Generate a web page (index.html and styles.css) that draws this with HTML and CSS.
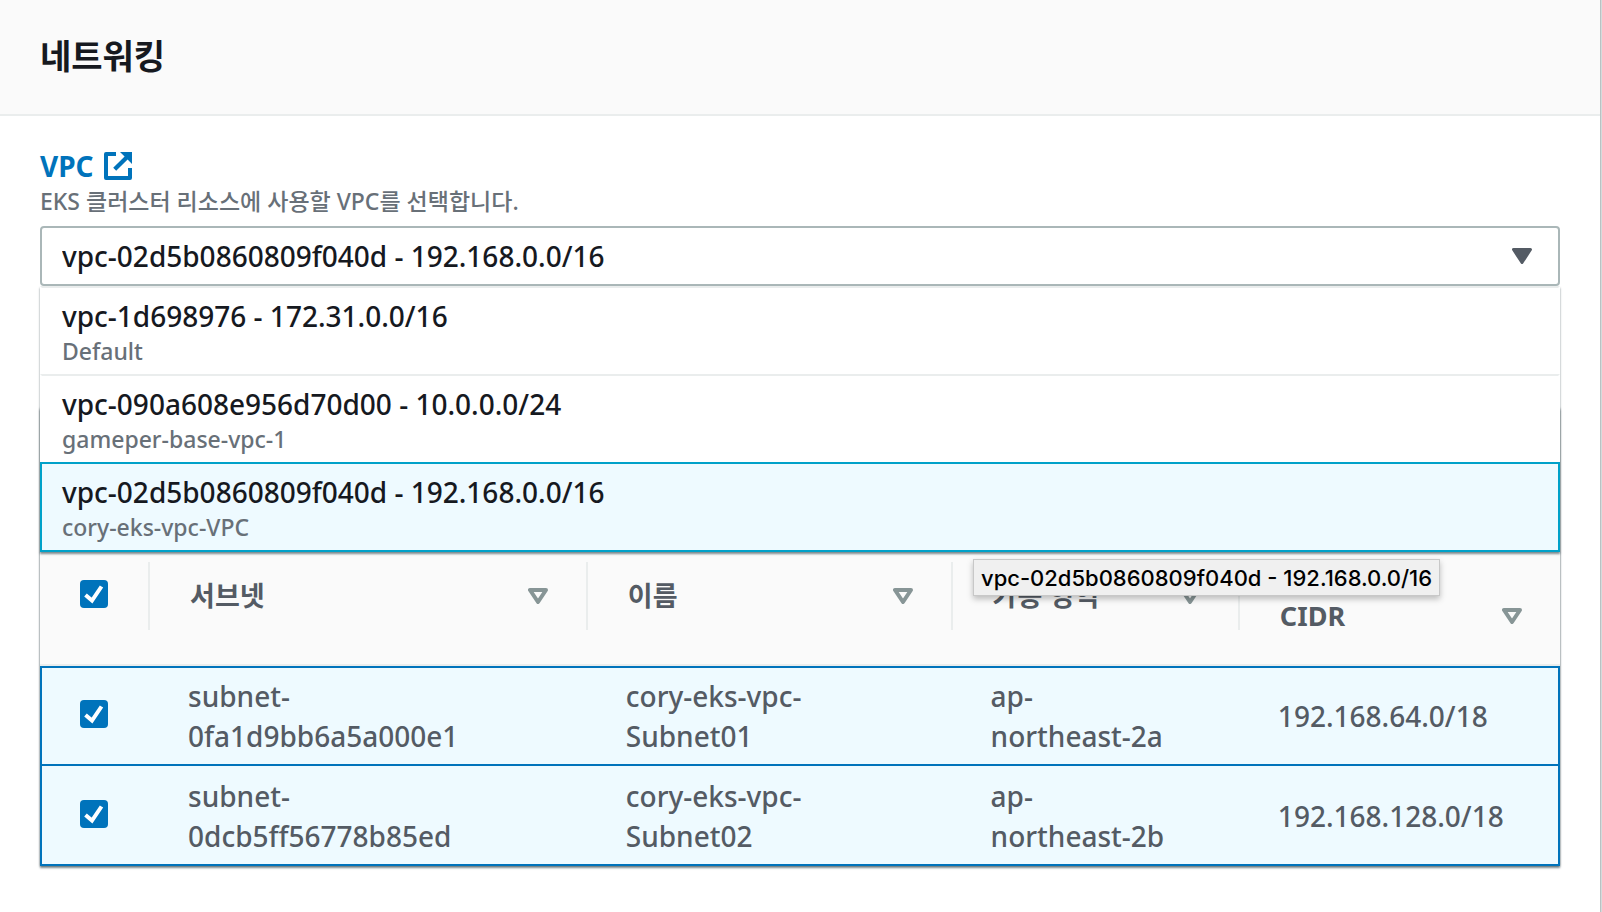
FILE: index.html
```html
<!DOCTYPE html>
<html lang="ko">
<head>
<meta charset="utf-8">
<title>네트워킹</title>
<link rel="stylesheet" href="styles.css">
</head>
<body>
<section class="panel">
  <header class="panel-header"><h2 class="panel-title">네트워킹</h2></header>
  <div class="panel-body">
    <div class="field">
      <label class="field-label" for="vpc"><a class="link" href="#vpc">VPC
        <svg class="external" viewBox="0 0 28 28" aria-hidden="true"><path d="M12 2H2V26H26V16" fill="none" stroke="currentColor" stroke-width="4" stroke-linejoin="round"/><path d="M16 0H28V12L23.600 7.400L12.200 18.800L9.200 15.800L20.600 4.400Z" fill="currentColor"/></svg></a></label>
      <p class="hint">EKS 클러스터 리소스에 사용할 VPC를 선택합니다.</p>
      <div class="dropdown">
        <select class="select" id="vpc"><option>vpc-02d5b0860809f040d - 192.168.0.0/16</option></select>
        <svg class="caret" viewBox="0 0 20 16" aria-hidden="true"><path d="M1.500 1.500H18.500L10 14.500Z" fill="currentColor" stroke="currentColor" stroke-width="3" stroke-linejoin="round"/></svg>
        <ul class="menu" role="listbox">
          <li class="option" role="option"><span class="option-name">vpc-1d698976 - 172.31.0.0/16</span><span class="option-tag">Default</span></li>
          <li class="option" role="option"><span class="option-name">vpc-090a608e956d70d00 - 10.0.0.0/24</span><span class="option-tag">gameper-base-vpc-1</span></li>
          <li class="option selected" role="option" aria-selected="true"><span class="option-name">vpc-02d5b0860809f040d - 192.168.0.0/16</span><span class="option-tag">cory-eks-vpc-VPC</span></li>
        </ul>
        <div class="tooltip" role="tooltip">vpc-02d5b0860809f040d - 192.168.0.0/16</div>
      </div>
    </div>
    <div class="subnets">
      <table class="table">
        <colgroup><col class="col-check"><col class="col-subnet"><col class="col-name"><col class="col-zone"><col class="col-cidr"></colgroup>
        <thead>
          <tr>
            <th><div class="head"><input class="checkbox" type="checkbox" checked aria-label="모두 선택"></div></th>
            <th><div class="head"><span>서브넷</span><svg class="sort" viewBox="0 0 20 16"><path d="M2 2H18L10 14Z"/></svg></div></th>
            <th><div class="head"><span>이름</span><svg class="sort" viewBox="0 0 20 16"><path d="M2 2H18L10 14Z"/></svg></div></th>
            <th><div class="head"><span>가용 영역</span><svg class="sort" viewBox="0 0 20 16"><path d="M2 2H18L10 14Z"/></svg></div></th>
            <th><div class="head low"><span>CIDR</span><svg class="sort" viewBox="0 0 20 16"><path d="M2 2H18L10 14Z"/></svg></div></th>
          </tr>
        </thead>
        <tbody>
          <tr>
            <td><input class="checkbox" type="checkbox" checked aria-label="subnet-0fa1d9bb6a5a000e1"></td>
            <td>subnet-<br>0fa1d9bb6a5a000e1</td><td>cory-eks-vpc-<br>Subnet01</td><td>ap-<br>northeast-2a</td><td>192.168.64.0/18</td>
          </tr>
          <tr>
            <td><input class="checkbox" type="checkbox" checked aria-label="subnet-0dcb5ff56778b85ed"></td>
            <td>subnet-<br>0dcb5ff56778b85ed</td><td>cory-eks-vpc-<br>Subnet02</td><td>ap-<br>northeast-2b</td><td>192.168.128.0/18</td>
          </tr>
        </tbody>
      </table>
    </div>
  </div>
</section>
</body>
</html>
```
FILE: styles.css
```css
* { box-sizing: border-box; }
body {
  margin: 0;
  background: #d5dadb;
  color: #16191f;
  font-family: "Noto Sans", "Noto Sans CJK KR", sans-serif;
  font-size: 28px;
  font-weight: 500;
}
.panel {
  min-height: 100vh;
  margin-right: 1px;
  background: #fff;
  border-right: 1px solid #b9c2c3;
}
.panel-header {
  padding: 30px 40px 34px;
  background: #fafafa;
  border-bottom: 2px solid #eaeded;
}
.panel-title {
  margin: 0;
  font-size: 34px;
  line-height: 50px;
  font-family: "Noto Sans CJK KR", sans-serif;
}
.panel-body { padding: 32px 40px 46px; }
.field-label { display: block; height: 36px; line-height: 36px; font-weight: 700; }
.link {
  display: inline-flex;
  align-items: center;
  gap: 10px;
  color: #0073bb;
  text-decoration: none;
}
.external { width: 28px; height: 28px; }
.hint {
  margin: 0 0 8px;
  color: #687078;
  font-size: 23px;
  line-height: 34px;
}
.dropdown { position: relative; }
.select {
  display: block;
  width: 100%;
  height: 60px;
  padding: 0 60px 0 20px;
  border: 2px solid #aab7b8;
  border-radius: 4px;
  background: #fff;
  color: inherit;
  font: inherit;
  appearance: none;
}
.caret {
  position: absolute;
  top: 22px;
  right: 28px;
  width: 20px;
  height: 16px;
  color: #545b64;
  pointer-events: none;
}
.menu {
  position: absolute;
  z-index: 1;
  top: 100%;
  left: 0;
  right: 0;
  margin: 0;
  padding: 0;
  list-style: none;
  background: #fff;
  box-shadow: 0 2px 2px rgba(0, 28, 36, 0.5);
}
.option {
  display: grid;
  padding: 8px 20px;
  border: 2px solid transparent;
  border-top-color: #eaeded;
  border-bottom: 0;
}
.option.selected { border: 2px solid #00a1c9; background: #eefaff; }
.option-name { line-height: 40px; }
.option-tag { color: #687078; font-size: 23px; line-height: 30px; }
.tooltip {
  position: absolute;
  z-index: 2;
  top: 333px;
  left: 933px;
  padding: 1px 7px 0;
  border: 1px solid #c8c8c8;
  background: #f0f0f0;
  box-shadow: 0 3px 6px rgba(0, 0, 0, 0.25);
  color: #000;
  font-family: Inter, sans-serif;
  font-size: 22px;
  line-height: 34px;
  white-space: nowrap;
}
.subnets {
  margin-top: 122px;
  padding-top: 120px;
  background: #fafafa;
  box-shadow: 0 2px 2px rgba(0, 28, 36, 0.5), 0 0 2px rgba(0, 28, 36, 0.4);
}
.table {
  width: 100%;
  border-collapse: separate;
  border-spacing: 0;
  table-layout: fixed;
  color: #545b64;
}
.col-check { width: 7.24%; }
.col-subnet { width: 28.8%; }
.col-name { width: 24%; }
.col-zone { width: 18.9%; }
th {
  height: 138px;
  padding: 0;
  border-bottom: 2px solid #eaeded;
  font-size: 27px;
  text-align: left;
}
.head {
  display: flex;
  align-items: center;
  justify-content: space-between;
  height: 68px;
  padding: 0 38px 0 40px;
  border-right: 2px solid #eaeded;
  line-height: 40px;
}
.head.low { padding-top: 40px; border-right: 0; }
.sort { width: 20px; height: 16px; fill: none; stroke: #879596; stroke-width: 4; stroke-linejoin: round; }
td {
  padding: 8px 38px;
  border-bottom: 2px solid #0073bb;
  background: #eefaff;
  line-height: 40px;
}
tbody tr:first-child td { border-top: 2px solid #0073bb; }
tbody tr:last-child td { padding-top: 10px; }
td:first-child { border-left: 2px solid #0073bb; }
td:last-child { border-right: 2px solid #0073bb; }
.checkbox {
  display: block;
  width: 28px;
  height: 28px;
  margin: 0 0 4px;
  border-radius: 4px;
  appearance: none;
  background: #0073bb url("data:image/svg+xml,%3Csvg xmlns='http://www.w3.org/2000/svg' viewBox='0 0 28 28'%3E%3Cpath d='M5.500 15L12 20.500L21.500 6.500' fill='none' stroke='white' stroke-width='4'/%3E%3C/svg%3E");
}
```
